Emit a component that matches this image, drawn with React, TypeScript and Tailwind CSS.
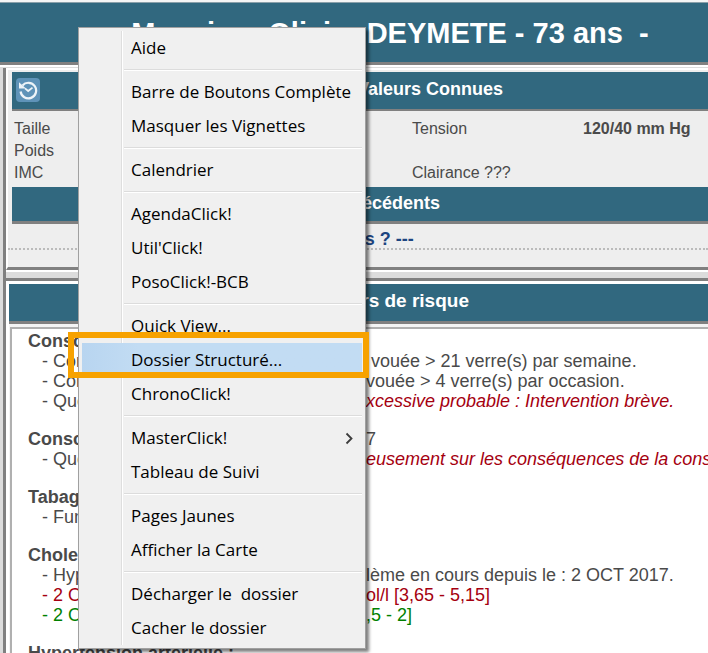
import type { ReactNode } from "react";

type Entry = { label: string; submenu?: boolean; active?: boolean };

const groups: Entry[][] = [
  [{ label: "Aide" }],
  [{ label: "Barre de Boutons Complète" }, { label: "Masquer les Vignettes" }],
  [{ label: "Calendrier" }],
  [{ label: "AgendaClick!" }, { label: "Util'Click!" }, { label: "PosoClick!-BCB" }],
  [{ label: "Quick View..." }, { label: "Dossier Structuré...", active: true }, { label: "ChronoClick!" }],
  [{ label: "MasterClick!", submenu: true }, { label: "Tableau de Suivi" }],
  [{ label: "Pages Jaunes" }, { label: "Afficher la Carte" }],
  [{ label: "Décharger le  dossier" }, { label: "Cacher le dossier" }],
];

function MenuItem({ label, submenu, active }: Entry) {
  return (
    <button
      type="button"
      role="menuitem"
      className={
        "relative flex h-[34px] w-full items-center justify-between pr-2 pl-[49px] text-left whitespace-pre " +
        (active ? "bg-linear-to-r from-[#b8d5f0] via-[#c2dcf3] via-20% to-[#c2dcf3]" : "")
      }
    >
      <span>{label}</span>
      {submenu && (
        <svg width="9" height="13" viewBox="0 0 9 13" fill="none" stroke="#3c3c3c" strokeWidth="1.8" aria-hidden="true">
          <path d="M1.5 1.5 6.5 6.5 1.5 11.5" />
        </svg>
      )}
      {active && <span className="pointer-events-none absolute -top-[11px] -right-[7px] -bottom-px -left-[14px] z-10 border-6 border-[#f7a200]" />}
    </button>
  );
}

function ContextMenu() {
  return (
    <div
      role="menu"
      className="absolute top-[27px] left-[78px] w-[288px] border border-[#a0a0a0] bg-[#f0f0f0] p-[3px] font-['Open_Sans','Noto_Sans',sans-serif] text-[17px] leading-6 text-black shadow-[3px_3px_3px_rgba(0,0,0,0.5)]"
    >
      <div className="absolute top-[3px] bottom-[3px] left-[42px] w-[2px] border-r border-l border-r-white border-l-[#dedede]" />
      {groups.map((group, i) => (
        <div key={i} role="group">
          {i > 0 && (
            <div className="flex h-[10px] items-center pl-[42px]">
              <div className="h-[2px] w-full border-t border-b border-t-[#dcdcdc] border-b-white" />
            </div>
          )}
          {group.map((entry) => (
            <MenuItem key={entry.label} {...entry} />
          ))}
        </div>
      ))}
    </div>
  );
}

function Band({ children, className }: { children: ReactNode; className: string }) {
  return (
    <h2 className={"flex items-center justify-center border-[#808080] bg-[#31687f] pb-[3px] pl-[52px] leading-6 font-bold text-white " + className}>
      {children}
    </h2>
  );
}

type Line = { left: string; right?: string; tone?: string; title?: boolean; alert?: boolean };

const lines: Line[] = [
  { left: "Consommation", title: true },
  { left: "- Consommation", right: " vouée > 21 verre(s) par semaine." },
  { left: "- Consommation", right: "vouée > 4 verre(s) par occasion." },
  { left: "- Questionnaire", right: "xcessive probable : Intervention brève.", alert: true },
  { left: "" },
  { left: "Consommation", right: "7", title: true },
  { left: "- Questionnaire", right: "eusement sur les conséquences de la consommation", alert: true },
  { left: "" },
  { left: "Tabagisme", title: true },
  { left: "- Fumeur" },
  { left: "" },
  { left: "Cholestérol", title: true },
  { left: "- Hypercholestérolémie", right: "lème en cours depuis le : 2 OCT 2017." },
  { left: "- 2 OCT 2017", right: "ol/l [3,65 - 5,15]", tone: "text-[#a50010]" },
  { left: "- 2 OCT 2017", right: ",5 - 2]", tone: "text-[#008000]" },
  { left: "" },
  { left: "Hypertension artérielle :", title: true },
];

export default function App() {
  return (
    <main className="relative h-screen overflow-hidden bg-[#dcdcdc] font-['Liberation_Sans',Arial,sans-serif] text-[#4a4a4a]">
      <header className="border-t-2 border-[#f5f5f5]">
        <h1 className="flex h-[63px] items-center justify-center border-t border-b-3 border-t-[#8aa0aa] border-b-[#808080] bg-[#31687f] pl-[72px] text-[29px] leading-8 font-bold whitespace-pre text-white">
          Monsieur Olivier DEYMETE - 73 ans  -
        </h1>
        <div className="h-[2px] bg-white" />
      </header>

      <div className="ml-[3px] border-l-3 border-[#808080]">
        <section className="mt-px border-t-2 border-b-3 border-l-2 border-t-white border-b-[#808080] border-l-white bg-[#eeeeee] pt-[2px]">
          <Band className="relative ml-1 h-[39px] border-b-2 text-lg">
            <button type="button" aria-label="Historique" className="absolute top-[6px] left-1 flex size-6 items-center justify-center rounded-sm bg-[#5f93b8]">
              <svg width="20" height="20" viewBox="0 0 20 20" fill="none" stroke="#eef4f8" strokeWidth="2.2" aria-hidden="true">
                <path d="M4.5 5.4A7.8 7.8 0 1 1 2.6 11.5" />
                <path d="M1 2.2v6.4h7z" fill="#eef4f8" stroke="none" />
                <path d="m7 8.4 3.2 2.6 4.3-3.4" strokeWidth="1.8" />
              </svg>
            </button>
            Dernières Valeurs Connues
          </Band>
          <div className="ml-1 flex h-[76px] pt-[7px] pl-[2px] text-base leading-[22px]">
            <dl className="w-[398px]">
              <dt>Taille</dt>
              <dt>Poids</dt>
              <dt>IMC</dt>
            </dl>
            <dl className="grid flex-1 grid-cols-[171px_1fr] grid-rows-[22px_22px_22px]">
              <dt>Tension</dt>
              <dd className="font-bold whitespace-nowrap">120/40 mm Hg</dd>
              <dt className="row-start-3">Clairance ???</dt>
            </dl>
          </div>
          <Band className="ml-1 h-[37px] border-b-3 text-lg">Antécédents</Band>
          <div className="h-[43px]">
            <p className="h-[26px] border-b-2 border-dotted border-[#bbbbbb] pt-1 pr-[26px] text-center text-lg leading-[22px] font-bold text-[#1d4580]">
              --- Allergies ? ---
            </p>
          </div>
        </section>

        <div className="h-[11px] border-t-2 border-b-3 border-t-white border-b-[#808080]" />

        <section className="border-t-3 border-l-3 border-white bg-[#f4f4f4]">
          <Band className="h-10 border-b-3 text-[19px]">Facteurs de risque</Band>
          <div className="mt-[3px] ml-[1px] border-t-2 border-l-2 border-[#b0b0b0] bg-white pt-[2px] text-lg leading-[20px]">
            {lines.map(({ left, right, tone, title, alert }, i) => (
              <p key={i} className={"flex whitespace-pre " + (left ? "h-[20px] " : "h-[18px] ") + (tone ?? "")}>
                <span className={"w-[354px] shrink-0 overflow-hidden " + (title ? "pl-4 font-bold" : "pl-[30px]")}>{left}</span>
                <span className={alert ? "text-[#a50010] italic" : ""}>{right}</span>
              </p>
            ))}
          </div>
        </section>
      </div>

      <ContextMenu />
    </main>
  );
}
